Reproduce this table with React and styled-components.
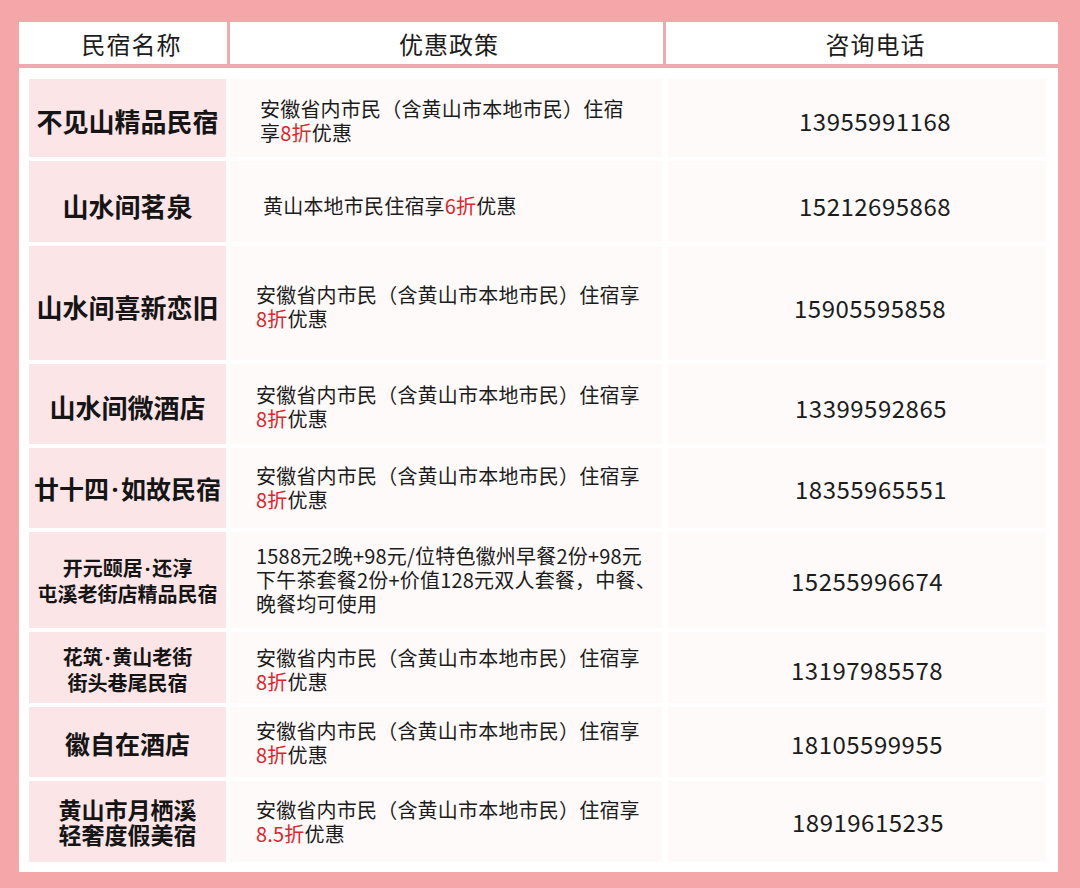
import React from "react";
import styled, { createGlobalStyle } from "styled-components";

const Global = createGlobalStyle`
  html, body { margin: 0; padding: 0; background: #f4a6a8; }
  body { font-family: "Noto Sans CJK SC", "Noto Sans", sans-serif; color: #1c1c1c; }
`;

const Page = styled.div`
  width: 1080px;
  height: 888px;
  box-sizing: border-box;
  padding: 22px 22px 0 19px;
  background: #f4a6a8;
`;

const Panel = styled.div`
  width: 1039px;
  background: #ffffff;
`;

const HeaderRow = styled.div`
  display: grid;
  grid-template-columns: 208px 433px 1fr;
  column-gap: 3px;
  background: #eeaaae;
  border-bottom: 4px solid #eeaaae;
`;

const HeaderCell = styled.div`
  height: 42px;
  padding-top: 1px;
  padding-left: ${(p) => p.$shift}px;
  box-sizing: border-box;
  background: #ffffff;
  display: flex;
  align-items: center;
  justify-content: center;
  font-size: 24px;
  letter-spacing: 1px;
  color: #1c1c1c;
`;

const Body = styled.div`
  display: flex;
  flex-direction: column;
  gap: 4px;
  padding: 11px 10px 10px 10px;
`;

const Row = styled.div`
  display: grid;
  grid-template-columns: 197px 432px 380px;
  column-gap: 4px;
  height: ${(p) => p.$h}px;
  & > div:last-child { margin-left: 2px; }
`;

const NameCell = styled.div`
  background: #fbe5e7;
  display: flex;
  align-items: center;
  justify-content: center;
  text-align: center;
  font-size: ${(p) => p.$size}px;
  line-height: ${(p) => (p.$size < 24 ? 25 : 30)}px;
  font-weight: 700;
  padding-top: ${(p) => p.$off}px;
  box-sizing: border-box;
  color: #151515;
`;

const Dot = styled.span`
  font-family: "Noto Sans", "DejaVu Sans", sans-serif;
  padding: 0 0.1em;
`;

const PolicyCell = styled.div`
  background: #fefafa;
  display: flex;
  align-items: center;
  box-sizing: border-box;
  padding-left: ${(p) => p.$pl}px;
  padding-top: ${(p) => p.$off}px;
  font-size: 20px;
  letter-spacing: 0.2px;
  line-height: 24px;
  color: #1c1c1c;
`;

const Red = styled.span`
  color: #e0242a;
`;

const PhoneCell = styled.div`
  background: #fefafa;
  display: flex;
  align-items: center;
  box-sizing: border-box;
  padding-left: ${(p) => p.$pl}px;
  padding-top: ${(p) => p.$off}px;
  font-size: 24px;
  letter-spacing: 0.5px;
  color: #1c1c1c;
`;

const std = (r) => (
  <>
    安徽省内市民（含黄山市本地市民）住宿享
    <br />
    <Red>{r}</Red>优惠
  </>
);

const rows = [
  {
    h: 78,
    off: 5,
    name: [<>不见山精品民宿</>],
    size: 26,
    pl: 30,
    policy: (
      <>
        安徽省内市民（含黄山市本地市民）住宿
        <br />
        享<Red>8折</Red>优惠
      </>
    ),
    phone: "13955991168",
    ppl: 131,
  },
  {
    h: 81,
    off: 8,
    name: [<>山水间茗泉</>],
    size: 26,
    pl: 33,
    policy: (
      <>
        黄山本地市民住宿享<Red>6折</Red>优惠
      </>
    ),
    phone: "15212695868",
    ppl: 131,
  },
  { h: 114, off: 8, name: [<>山水间喜新恋旧</>], size: 26, pl: 26, policy: std("8折"), phone: "15905595858", ppl: 126 },
  { h: 80, off: 6, name: [<>山水间微酒店</>], size: 26, pl: 26, policy: std("8折"), phone: "13399592865", ppl: 127 },
  {
    h: 80,
    off: 0,
    name: [<>廿十四<Dot>·</Dot>如故民宿</>],
    size: 25,
    pl: 26,
    policy: std("8折"),
    phone: "18355965551",
    ppl: 127,
  },
  {
    h: 96,
    off: 0,
    name: [<>开元颐居<Dot>·</Dot>还淳</>, <>屯溪老街店精品民宿</>],
    size: 20,
    pl: 26,
    policy: (
      <>
        1588元2晚+98元/位特色徽州早餐2份+98元
        <br />
        下午茶套餐2份+价值128元双人套餐，中餐、
        <br />
        晚餐均可使用
      </>
    ),
    phone: "15255996674",
    ppl: 123,
  },
  {
    h: 71,
    off: 4,
    name: [<>花筑<Dot>·</Dot>黄山老街</>, <>街头巷尾民宿</>],
    size: 20,
    pl: 26,
    policy: std("8折"),
    phone: "13197985578",
    ppl: 123,
  },
  { h: 70, off: 2, name: [<>徽自在酒店</>], size: 25, pl: 26, policy: std("8折"), phone: "18105599955", ppl: 123 },
  {
    h: 81,
    off: 0,
    name: [<>黄山市月栖溪</>, <>轻奢度假美宿</>],
    size: 23,
    pl: 26,
    policy: std("8.5折"),
    phone: "18919615235",
    ppl: 124,
  },
];

export default function App() {
  return (
    <Page>
      <Global />
      <Panel>
        <HeaderRow>
          <HeaderCell $shift={17}>民宿名称</HeaderCell>
          <HeaderCell $shift={5}>优惠政策</HeaderCell>
          <HeaderCell $shift={27}>咨询电话</HeaderCell>
        </HeaderRow>
        <Body>
          {rows.map((r, i) => (
            <Row key={i} $h={r.h}>
              <NameCell $size={r.size} $off={r.off}>
                <div>
                  {r.name.map((n, j) => (
                    <React.Fragment key={j}>
                      {j > 0 && <br />}
                      {n}
                    </React.Fragment>
                  ))}
                </div>
              </NameCell>
              <PolicyCell $pl={r.pl} $off={r.off}>
                <div>{r.policy}</div>
              </PolicyCell>
              <PhoneCell $pl={r.ppl} $off={r.off}>
                {r.phone}
              </PhoneCell>
            </Row>
          ))}
        </Body>
      </Panel>
    </Page>
  );
}
